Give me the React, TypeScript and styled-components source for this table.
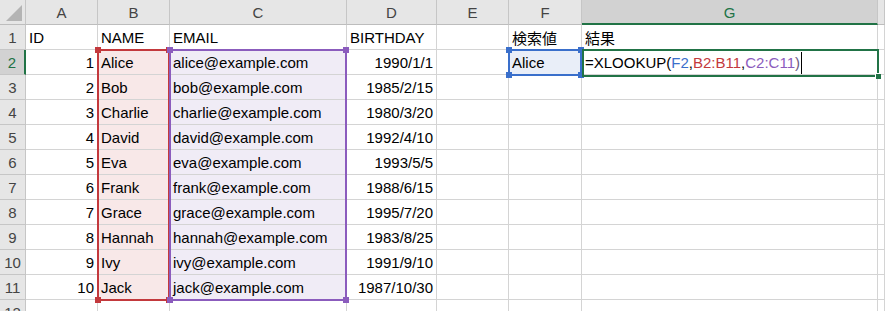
import React from "react";
import styled, { createGlobalStyle } from "styled-components";

// column widths include the 1px grid line on the right
const COLS = [26, 72, 72, 177, 90, 72, 73, 296];
const LETTERS = ["A", "B", "C", "D", "E", "F", "G", ""];
const ROW_H = 25;
const ROW_COUNT = 12;

type Tint = "none" | "red" | "purple" | "blue";
type Align = "left" | "right";

const TINTS: Record<Tint, string> = {
  none: "#ffffff",
  red: "#f8e8e8",
  purple: "#f0ecf6",
  blue: "#e9eef8",
};

const people = [
  ["Alice", "alice@example.com", "1990/1/1"],
  ["Bob", "bob@example.com", "1985/2/15"],
  ["Charlie", "charlie@example.com", "1980/3/20"],
  ["David", "david@example.com", "1992/4/10"],
  ["Eva", "eva@example.com", "1993/5/5"],
  ["Frank", "frank@example.com", "1988/6/15"],
  ["Grace", "grace@example.com", "1995/7/20"],
  ["Hannah", "hannah@example.com", "1983/8/25"],
  ["Ivy", "ivy@example.com", "1991/9/10"],
  ["Jack", "jack@example.com", "1987/10/30"],
];

const GlobalStyle = createGlobalStyle`
  html, body {
    margin: 0;
    padding: 0;
    background: #ffffff;
  }
  body {
    font-family: "Liberation Sans", "Noto Sans CJK JP", Arial, sans-serif;
  }
`;

const Sheet = styled.div`
  position: relative;
  width: 885px;
  height: 311px;
  overflow: hidden;
`;

const Grid = styled.div`
  display: grid;
  grid-template-columns: ${COLS.map((w) => `${w}px`).join(" ")} 1fr;
  grid-auto-rows: ${ROW_H}px;
`;

const HeaderBase = styled.div<{ $selected?: boolean }>`
  box-sizing: border-box;
  display: flex;
  align-items: center;
  justify-content: center;
  background: ${(p) => (p.$selected ? "#d2d2d2" : "#e6e6e6")};
  color: ${(p) => (p.$selected ? "#217346" : "#444444")};
  font-size: 15px;
  border-right: 1px solid #c6c6c6;
  border-bottom: 1px solid #bdbdbd;
`;

const Corner = styled(HeaderBase)`
  position: relative;
  svg {
    position: absolute;
    right: 3px;
    bottom: 3px;
  }
`;

const ColHeader = styled(HeaderBase)`
  padding-top: 1px;
  ${(p) => (p.$selected ? "border-bottom: 2px solid #217346;" : "")}
`;

const RowHeader = styled(HeaderBase)`
  border-bottom-color: #c6c6c6;
  ${(p) => (p.$selected ? "border-right: 2px solid #217346;" : "")}
`;

const Cell = styled.div<{ $align?: Align; $tint?: Tint }>`
  box-sizing: border-box;
  display: flex;
  align-items: center;
  justify-content: ${(p) => (p.$align === "right" ? "flex-end" : "flex-start")};
  padding: 1px 3px 0 3px;
  background: ${(p) => TINTS[p.$tint ?? "none"]};
  border-right: 1px solid #d4d4d4;
  border-bottom: 1px solid #d4d4d4;
  font-size: 15px;
  color: #000000;
  white-space: nowrap;
  overflow: visible;
`;

const RangeBox = styled.div<{ $color: string }>`
  position: absolute;
  box-sizing: border-box;
  border: 2px solid ${(p) => p.$color};
  pointer-events: none;
`;

const Handle = styled.span<{ $color: string; $v: "top" | "bottom"; $h: "left" | "right" }>`
  position: absolute;
  width: 6px;
  height: 6px;
  background: ${(p) => p.$color};
  ${(p) => p.$v}: -4px;
  ${(p) => p.$h}: -4px;
`;

const ActiveBox = styled.div`
  position: absolute;
  box-sizing: border-box;
  border: 2px solid #217346;
  pointer-events: none;
`;

const FillHandle = styled.span`
  position: absolute;
  right: -4px;
  bottom: -4px;
  width: 5px;
  height: 5px;
  background: #217346;
  border-left: 1px solid #ffffff;
  border-top: 1px solid #ffffff;
`;

const Caret = styled.span`
  display: inline-block;
  width: 1px;
  height: 22px;
  margin-left: 1px;
  background: #000000;
`;

const Ref = styled.span<{ $color: string }>`
  color: ${(p) => p.$color};
`;

// x of the grid line at the right of column index i (0 = row header)
const lineX = (i: number) => COLS.slice(0, i + 1).reduce((a, b) => a + b, 0) - 1;
const lineY = (row: number) => ROW_H * (row + 1) - 1;

const rangeStyle = (c0: number, c1: number, r0: number, r1: number) => {
  const left = lineX(c0 - 1);
  const right = lineX(c1);
  const top = lineY(r0 - 1);
  const bottom = lineY(r1);
  return { left, top, width: right - left + 1, height: bottom - top + 2 };
};

const Range: React.FC<{ color: string; c0: number; c1: number; r0: number; r1: number }> = ({
  color,
  c0,
  c1,
  r0,
  r1,
}) => (
  <RangeBox $color={color} style={rangeStyle(c0, c1, r0, r1)}>
    <Handle $color={color} $v="top" $h="left" />
    <Handle $color={color} $v="top" $h="right" />
    <Handle $color={color} $v="bottom" $h="left" />
    <Handle $color={color} $v="bottom" $h="right" />
  </RangeBox>
);

const RED = "#c3393d";
const PURPLE = "#8b5cbd";
const BLUE = "#3a6fcb";

type CellDef = { text?: React.ReactNode; align?: Align; tint?: Tint };

const rowCells = (r: number): CellDef[] => {
  if (r === 1) {
    return [
      { text: "ID" },
      { text: "NAME" },
      { text: "EMAIL" },
      { text: "BIRTHDAY" },
      {},
      { text: "検索値" },
      { text: "結果" },
      {},
    ];
  }
  const p = people[r - 2];
  const inData = !!p;
  return [
    { text: p ? r - 1 : undefined, align: "right" },
    { text: p?.[0], tint: inData ? "red" : "none" },
    { text: p?.[1], tint: inData ? "purple" : "none" },
    { text: p?.[2], align: "right" },
    {},
    r === 2 ? { text: "Alice", tint: "blue" } : {},
    r === 2
      ? {
          text: (
            <>
              =XLOOKUP(<Ref $color={BLUE}>F2</Ref>,<Ref $color={RED}>B2:B11</Ref>,
              <Ref $color={PURPLE}>C2:C11</Ref>
              <Ref $color="#6a5a80">)</Ref>
              <Caret />
            </>
          ),
        }
      : {},
    {},
  ];
};

const App: React.FC = () => {
  const active = rangeStyle(7, 7, 2, 2);
  return (
    <>
      <GlobalStyle />
      <Sheet>
        <Grid>
          <Corner>
            <svg width="16" height="16" viewBox="0 0 16 16">
              <polygon points="16,0 16,16 0,16" fill="#b4b4b4" />
            </svg>
          </Corner>
          {LETTERS.map((l, i) => (
            <ColHeader key={i} $selected={l === "G"}>
              {l}
            </ColHeader>
          ))}
          {Array.from({ length: ROW_COUNT }, (_, i) => i + 1).map((r) => (
            <React.Fragment key={r}>
              <RowHeader $selected={r === 2}>{r}</RowHeader>
              {rowCells(r).map((c, ci) => (
                <Cell key={ci} $align={c.align} $tint={c.tint}>
                  {c.text}
                </Cell>
              ))}
            </React.Fragment>
          ))}
        </Grid>
        <Range color={RED} c0={2} c1={2} r0={2} r1={11} />
        <Range color={PURPLE} c0={3} c1={3} r0={2} r1={11} />
        <Range color={BLUE} c0={6} c1={6} r0={2} r1={2} />
        <ActiveBox
          style={{
            left: active.left + 1,
            top: active.top,
            width: active.width,
            height: active.height + 1,
          }}
        >
          <FillHandle />
        </ActiveBox>
      </Sheet>
    </>
  );
};

export default App;
